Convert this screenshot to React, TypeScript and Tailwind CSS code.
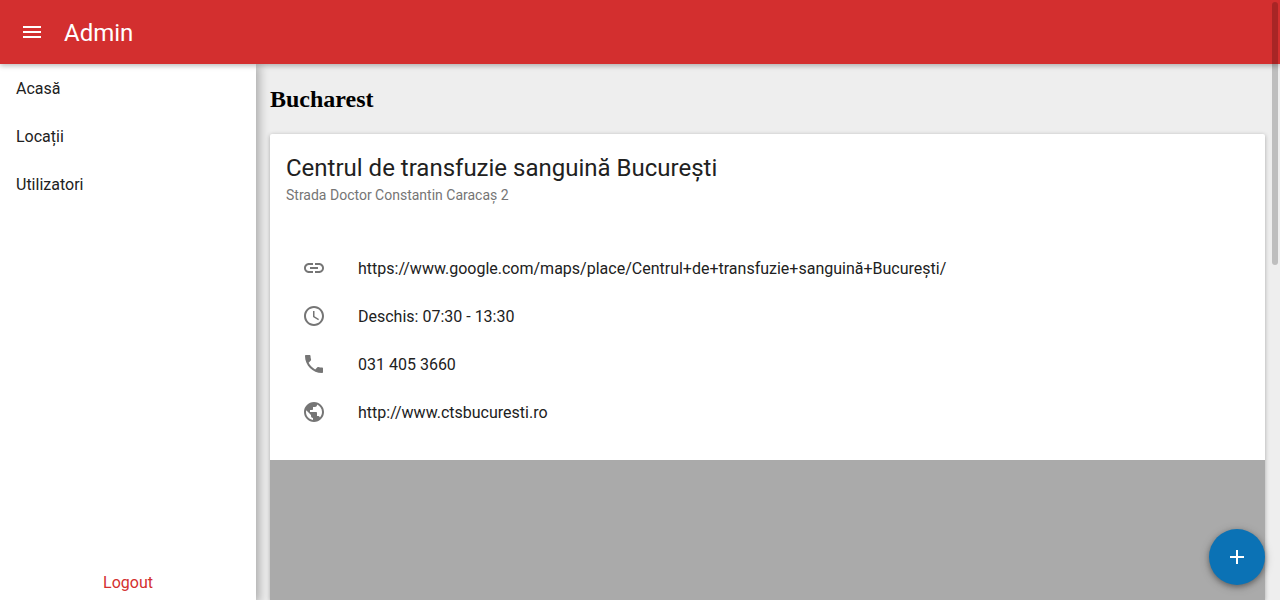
import type { ReactNode } from "react";
import { MdAccessTime, MdAdd, MdLink, MdMenu, MdPhone, MdPublic } from "react-icons/md";

const navItems = ["Acasă", "Locații", "Utilizatori"];

const mapUrl = "https://www.google.com/maps/place/Centrul+de+transfuzie+sanguină+București/";
const siteUrl = "http://www.ctsbucuresti.ro";

const details: { icon: ReactNode; text: string; href?: string }[] = [
  { icon: <MdLink />, text: mapUrl, href: mapUrl },
  { icon: <MdAccessTime />, text: "Deschis: 07:30 - 13:30" },
  { icon: <MdPhone />, text: "031 405 3660", href: "tel:0314053660" },
  { icon: <MdPublic />, text: siteUrl, href: siteUrl },
];

function Header() {
  return (
    <header className="relative z-20 flex h-16 shrink-0 items-center gap-5 bg-[#d32f2f] px-5 text-white shadow-[0_2px_5px_rgba(0,0,0,0.26)]">
      <button type="button" aria-label="Menu" className="text-2xl">
        <MdMenu />
      </button>
      <h1 className="pt-0.5 text-2xl">Admin</h1>
    </header>
  );
}

function Sidebar() {
  return (
    <aside className="relative z-10 flex w-64 shrink-0 flex-col justify-between bg-white shadow-[2px_2px_10px_1px_rgba(0,0,0,0.3)]">
      <nav>
        <ul>
          {navItems.map((item) => (
            <li key={item}>
              <a href="#" className="flex h-12 items-center px-4">
                {item}
              </a>
            </li>
          ))}
        </ul>
      </nav>
      <a href="#" className="pb-2 text-center text-[#d32f2f]">
        Logout
      </a>
    </aside>
  );
}

function LocationCard() {
  return (
    <article className="flex grow flex-col overflow-hidden rounded-t-xs bg-white shadow-[0_1px_4px_rgba(0,0,0,0.3)]">
      <div className="px-4 pt-4">
        <h3 className="text-2xl leading-9">Centrul de transfuzie sanguină București</h3>
        <p className="text-sm leading-[18px] text-[#757575]">Strada Doctor Constantin Caracaș 2</p>
      </div>
      <ul className="px-8 pt-10 pb-6">
        {details.map(({ icon, text, href }) => (
          <li key={text} className="flex h-12 items-center gap-8">
            <span className="text-2xl leading-none text-[#757575]">{icon}</span>
            {href ? <a href={href}>{text}</a> : <span>{text}</span>}
          </li>
        ))}
      </ul>
      <div className="grow bg-[#aaaaaa]" />
    </article>
  );
}

export default function App() {
  return (
    <div className="relative flex h-screen flex-col overflow-hidden bg-[#eeeeee] font-['Roboto',sans-serif] text-base leading-normal text-[#212121]">
      <Header />
      <div className="flex min-h-0 grow leading-[19px]">
        <Sidebar />
        <main className="flex min-w-0 grow flex-col pt-[19px] pr-[15px] pl-3.5">
          <h2 className="pb-[19px] font-['Liberation_Serif',serif] text-2xl font-bold text-black">
            Bucharest
          </h2>
          <LocationCard />
        </main>
      </div>
      <button
        type="button"
        aria-label="Add"
        className="absolute right-[15px] bottom-[15px] z-10 flex size-14 items-center justify-center rounded-full bg-[#0b72b5] text-2xl text-white shadow-[0_2px_10px_rgba(0,0,0,0.26),0_2px_5px_rgba(0,0,0,0.26)]"
      >
        <MdAdd />
      </button>
      <div aria-hidden="true" className="absolute top-0.5 right-0.5 z-30 h-[263px] w-1.5 rounded-full bg-black/20" />
    </div>
  );
}
